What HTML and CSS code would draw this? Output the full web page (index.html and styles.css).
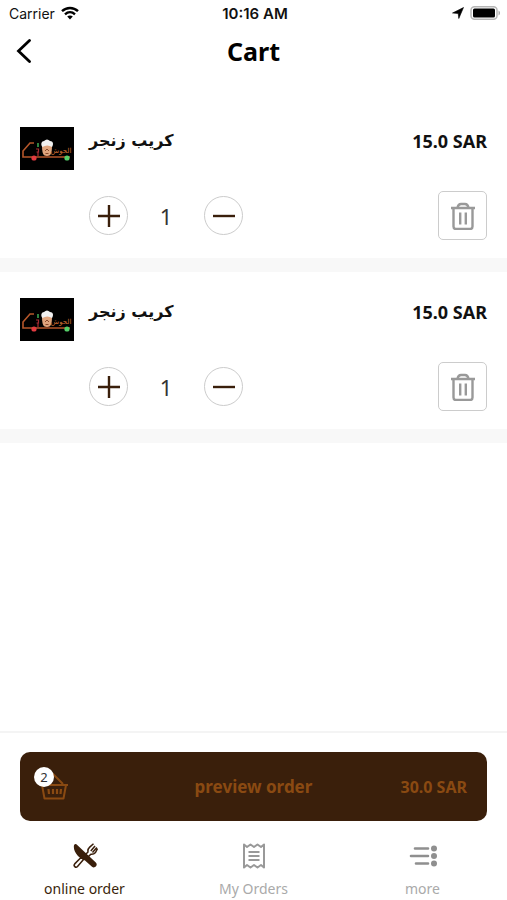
FILE: index.html
```html
<!DOCTYPE html>
<html lang="en">
<head>
<meta charset="utf-8">
<meta name="viewport" content="width=device-width, initial-scale=1">
<title>Cart</title>
<link rel="stylesheet" href="styles.css">
</head>
<body>
<svg class="defs" width="0" height="0" aria-hidden="true">
  <symbol id="logo" viewBox="0 0 54 43">
    <rect width="54" height="43" fill="#000"/>
    <path d="M14 16h-4l-7 8v6h47" fill="none" stroke="#b4562a" stroke-width="1.6"/>
    <path d="M18 16v4" stroke="#3fae55" stroke-width="1.5"/>
    <path d="M16 22h2.500v3h-2M18 25v4" fill="none" stroke="#a52a32" stroke-width="1.200"/>
    <path d="M22 18c0 8 1 11 5 11s5-3 5-11z" fill="#e0a57e"/>
    <path d="M25 24l2-2 2 2M25.500 26.500h3" fill="none" stroke="#8a4a2c"/>
    <path d="M22.500 20c-2.500-3-.5-6 1.500-6 2-2 4-2 6 0 3 0 4 3 2 6-3-2-6.500-2-9.500 0z" fill="#f0f0f0"/>
    <circle cx="14" cy="31" r="2.600" fill="#e23b41"/>
    <circle cx="47" cy="31" r="2.600" fill="#55cf68"/>
  </symbol>
  <symbol id="plus" viewBox="0 0 24 24"><path d="M12 1v22M1 12h22" stroke="#3a1f0b" stroke-width="2.400"/></symbol>
  <symbol id="minus" viewBox="0 0 24 24"><path d="M1 12h22" stroke="#3a1f0b" stroke-width="2.400"/></symbol>
  <symbol id="trash" viewBox="0 0 26 28">
    <g fill="none" stroke="#999" stroke-width="2.400">
      <path d="M1 6h24M3.500 6v18.500a2.500 2.500 0 0 0 2.500 2.500h14a2.500 2.500 0 0 0 2.500-2.500V6"/>
      <path d="M7.500 6c.5-3 1.500-4 3.500-4h4c2 0 3 1 3.500 4M10.200 10.500v12M15.800 10.500v12"/>
    </g>
  </symbol>
</svg>

<div class="app">
  <div class="status">
    <div class="status-left">
      <span>Carrier</span>
      <svg width="18" height="14" viewBox="0 0 18 14" fill="none" stroke="#000" stroke-width="2.400">
        <path d="M1 5.200c4.500-4.300 11.500-4.300 16 0M4 8.300c3-2.700 7-2.700 10 0"/>
        <path d="M9 13.500l-2.800-2.900c1.600-1.400 4-1.400 5.600 0z" fill="#000" stroke="none"/>
      </svg>
    </div>
    <span class="time">10:16 AM</span>
    <div class="status-right">
      <svg width="12" height="12" viewBox="0 0 12 12"><path d="M11.500.5L6.800 11.500 6.200 6.500 .5 6z" stroke="#000" stroke-width=".6"/></svg>
      <svg width="31" height="14" viewBox="0 0 31 14">
        <rect x="1" y=".8" width="26" height="12.400" rx="3.500" fill="#fff" stroke="#b5b5b5" stroke-width="1.500"/>
        <rect x="3" y="2.500" width="22" height="9" rx="1.500"/>
        <path d="M28.500 4.500c2 .8 2 4.200 0 5z" fill="#aaa"/>
      </svg>
    </div>
  </div>

  <header class="header">
    <button class="back" aria-label="Back">
      <svg width="16" height="24" viewBox="0 0 16 24"><path d="M13.500 1.500L2.500 12l11 10.500" fill="none" stroke="#000" stroke-width="2.800" stroke-linecap="round"/></svg>
    </button>
    <h1>Cart</h1>
  </header>

  <main class="items">
    <article class="item">
      <svg class="thumb" viewBox="0 0 54 43"><use href="#logo"/><text x="41" y="26" text-anchor="middle" class="logo-text">الحوش</text></svg>
      <h2 lang="ar" dir="rtl">كريب زنجر</h2>
      <span class="price">15.0 SAR</span>
      <div class="stepper">
        <button class="round" aria-label="Increase"><svg width="24" height="24"><use href="#plus"/></svg></button>
        <span class="qty">1</span>
        <button class="round" aria-label="Decrease"><svg width="24" height="24"><use href="#minus"/></svg></button>
      </div>
      <button class="delete" aria-label="Remove"><svg width="26" height="28"><use href="#trash"/></svg></button>
    </article>
    <article class="item">
      <svg class="thumb" viewBox="0 0 54 43"><use href="#logo"/><text x="41" y="26" text-anchor="middle" class="logo-text">الحوش</text></svg>
      <h2 lang="ar" dir="rtl">كريب زنجر</h2>
      <span class="price">15.0 SAR</span>
      <div class="stepper">
        <button class="round" aria-label="Increase"><svg width="24" height="24"><use href="#plus"/></svg></button>
        <span class="qty">1</span>
        <button class="round" aria-label="Decrease"><svg width="24" height="24"><use href="#minus"/></svg></button>
      </div>
      <button class="delete" aria-label="Remove"><svg width="26" height="28"><use href="#trash"/></svg></button>
    </article>
  </main>

  <div class="checkout">
    <button class="preview">
      <span class="basket">
        <svg width="28" height="28" viewBox="0 0 28 28" fill="none" stroke="#8a4a12" stroke-width="2" stroke-linejoin="round">
          <path d="M0 12h28M2 12l2.500 13.500h19L26 12M4 11L13 1l10 10"/>
          <path d="M8.500 16l.5 5M13 16v5M17 16v5M21 16l-.5 5" stroke-width="2.200"/>
        </svg>
        <span class="badge">2</span>
      </span>
      <span class="preview-label">preview order</span>
      <span class="total">30.0 SAR</span>
    </button>
  </div>

  <nav class="tabs">
    <a class="tab active" href="#order">
      <svg width="26" height="26" viewBox="0 0 26 26">
        <g fill="#fff" stroke="#3a1f0b" stroke-width="1.500" stroke-linejoin="round">
          <path d="M11.500 16.500L5.500 23.500c-1.800 1.800-4.500-.7-2.800-2.600L9.500 14z"/>
          <path d="M13.500 11.500l2.500-2.500c-.5-2.500.3-3.600 1.700-4.900L21.500.8M16.500 13.500l2.300-2.300c2.600.4 3.700-.6 4.700-1.700L25.500 5.500M18.800 8l4.200-5M20.500 9.500l4.300-5" fill="none"/>
        </g>
        <path d="M2 2.200c.8-1.600 2.200-1.300 3.200-.3L23.800 19.500c2.600 2.800-.9 6.300-3.800 4.300L13 17.500C7 15 .8 9 2 2.200z" fill="#3a1f0b"/>
      </svg>
      <span>online order</span>
    </a>
    <a class="tab" href="#orders">
      <svg width="26" height="26" viewBox="0 0 26 26" fill="none" stroke="#999" stroke-width="2" stroke-linejoin="round">
        <path d="M3 1.500l3 2.500 3.500-2.500L13 4l3.500-2.500L20 4l3-2.500v23L20 22l-3.500 2.500L13 22l-3.500 2.500L6 22l-3 2.500z"/>
        <path d="M7.500 9h11M7.500 13h11M7.500 17h11"/>
      </svg>
      <span>My Orders</span>
    </a>
    <a class="tab" href="#more">
      <svg width="28" height="26" viewBox="0 0 28 26" stroke="#8f8f8f" stroke-width="2.600" stroke-linecap="round">
        <path d="M6 5.500h13M2 13h17M7 20.500h12"/>
        <g fill="#8f8f8f" stroke="none"><circle cx="25" cy="5.500" r="3"/><circle cx="25" cy="13" r="3"/><circle cx="25" cy="20.500" r="3"/></g>
      </svg>
      <span>more</span>
    </a>
  </nav>
</div>
</body>
</html>
```
FILE: styles.css
```css
* { box-sizing: border-box; }
body {
  margin: 0;
  background: #fff;
  color: #111;
  font-family: "Noto Sans", "DejaVu Sans", sans-serif;
}
button {
  padding: 0;
  border: 0;
  background: none;
  color: inherit;
  font: inherit;
  cursor: pointer;
}
svg { display: block; }
.defs { position: absolute; }
.logo-text { font: 7px "DejaVu Sans", sans-serif; fill: #d06c30; }

.app { display: flex; flex-direction: column; min-height: 100vh; }

.status {
  display: grid;
  grid-template-columns: 1fr auto 1fr;
  align-items: center;
  height: 26px;
  padding: 0 6px 0 9px;
  font: 14px Inter, sans-serif;
}
.status-left, .status-right { display: flex; align-items: center; gap: 6px; }
.status-right { justify-content: flex-end; }
.time { font-size: 15px; font-weight: 600; }

.header {
  display: grid;
  grid-template-columns: 48px 1fr 48px;
  align-items: center;
  height: 50px;
}
.back { display: flex; justify-content: center; }
.header h1 {
  margin: 0;
  text-align: center;
  font-size: 25px;
  line-height: 44px;
  font-weight: 700;
  color: #000;
}

.items { flex: 1; padding-top: 25px; }
.item {
  display: grid;
  grid-template-columns: 54px 1fr auto;
  column-gap: 15px;
  row-gap: 21px;
  padding: 26px 20px 18px;
  border-bottom: 14px solid #f8f8f8;
}
.thumb { width: 54px; height: 43px; }
.item h2 {
  margin: 0;
  justify-self: start;
  font: 700 16px/28px "DejaVu Sans", sans-serif;
}
.price { font-size: 18px; line-height: 28px; font-weight: 700; }
.stepper { grid-column: 2; display: flex; align-items: center; }
.round {
  display: flex;
  align-items: center;
  justify-content: center;
  width: 39px;
  height: 39px;
  border: 1px solid #ccc;
  border-radius: 50%;
}
.qty { width: 76px; text-align: center; font-size: 22px; line-height: 30px; color: #333; }
.delete {
  display: flex;
  align-items: center;
  justify-content: center;
  justify-self: end;
  width: 49px;
  height: 49px;
  border: 1px solid #ccc;
  border-radius: 5px;
}

.checkout { padding: 19px 20px 17px; border-top: 2px solid #f4f4f4; }
.preview {
  display: grid;
  grid-template-columns: 1fr auto 1fr;
  align-items: center;
  width: 100%;
  height: 69px;
  padding: 0 20px;
  border-radius: 10px;
  background: #3a1f0b;
  color: #8a4a12;
  font-weight: 700;
}
.basket { position: relative; width: 28px; }
.badge {
  position: absolute;
  top: -6px;
  left: -6px;
  width: 20px;
  height: 20px;
  border-radius: 50%;
  background: #fff;
  color: #333;
  font-size: 13px;
  line-height: 20px;
  font-weight: 400;
}
.preview-label { font-size: 17px; }
.total { justify-self: end; font-size: 16px; }

.tabs { display: grid; grid-template-columns: repeat(3, 1fr); padding: 5px 0 0; }
.tab {
  display: flex;
  flex-direction: column;
  align-items: center;
  gap: 9px;
  height: 57px;
  color: #aaa;
  font-size: 14px;
  line-height: 22px;
  text-decoration: none;
}
.active { color: #3a1f0b; }
```
